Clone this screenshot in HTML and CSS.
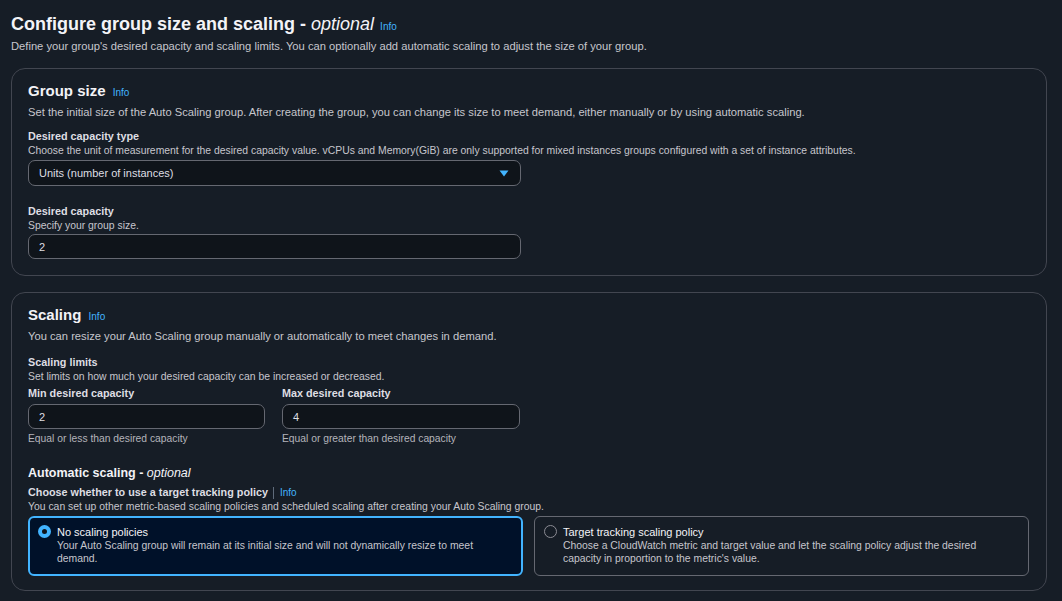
FILE: index.html
```html
<!DOCTYPE html>
<html>
<head>
<meta charset="utf-8">
<link rel="stylesheet" href="styles.css">
</head>
<body>
<div class="page">
  <h1 class="title">Configure group size and scaling - <i>optional</i> <a class="info">Info</a></h1>
  <p class="subtitle">Define your group's desired capacity and scaling limits. You can optionally add automatic scaling to adjust the size of your group.</p>

  <section class="card card-size">
    <h2 class="card-title">Group size <a class="info">Info</a></h2>
    <p class="card-desc">Set the initial size of the Auto Scaling group. After creating the group, you can change its size to meet demand, either manually or by using automatic scaling.</p>

    <div class="field">
      <div class="label">Desired capacity type</div>
      <div class="hint">Choose the unit of measurement for the desired capacity value. vCPUs and Memory(GiB) are only supported for mixed instances groups configured with a set of instance attributes.</div>
      <div class="input select">
        <span>Units (number of instances)</span>
        <svg class="caret" width="10" height="7" viewBox="0 0 10 7"><path d="M0.5 0.5 H9.5 L5 6.5 Z" fill="#42b4ff"/></svg>
      </div>
    </div>

    <div class="field">
      <div class="label">Desired capacity</div>
      <div class="hint">Specify your group size.</div>
      <div class="input">2</div>
    </div>
  </section>

  <section class="card card-scaling">
    <h2 class="card-title">Scaling <a class="info">Info</a></h2>
    <p class="card-desc">You can resize your Auto Scaling group manually or automatically to meet changes in demand.</p>

    <div class="label limits-label">Scaling limits</div>
    <div class="hint">Set limits on how much your desired capacity can be increased or decreased.</div>
    <div class="limits">
      <div class="limit">
        <div class="label">Min desired capacity</div>
        <div class="input">2</div>
        <div class="constraint">Equal or less than desired capacity</div>
      </div>
      <div class="limit">
        <div class="label">Max desired capacity</div>
        <div class="input">4</div>
        <div class="constraint">Equal or greater than desired capacity</div>
      </div>
    </div>

    <div class="auto">
      <div class="auto-title">Automatic scaling - <i>optional</i></div>
      <div class="label">Choose whether to use a target tracking policy <span class="sep"></span><a class="info">Info</a></div>
      <div class="hint">You can set up other metric-based scaling policies and scheduled scaling after creating your Auto Scaling group.</div>
      <div class="tiles">
        <div class="tile selected">
          <span class="radio on"></span>
          <div class="tile-text">
            <div class="tile-label">No scaling policies</div>
            <div class="tile-desc">Your Auto Scaling group will remain at its initial size and will not dynamically resize to meet demand.</div>
          </div>
        </div>
        <div class="tile">
          <span class="radio"></span>
          <div class="tile-text">
            <div class="tile-label">Target tracking scaling policy</div>
            <div class="tile-desc">Choose a CloudWatch metric and target value and let the scaling policy adjust the desired capacity in proportion to the metric's value.</div>
          </div>
        </div>
      </div>
    </div>
  </section>
</div>
</body>
</html>
```

FILE: styles.css
```css
* { box-sizing: border-box; }
html, body {
  margin: 0;
  padding: 0;
  background: #161d26;
  color: #dedee3;
  font-family: "Liberation Sans", Arial, sans-serif;
  font-size: 11px;
  overflow: hidden;
}
.page {
  padding: 12px 15px 0 11px;
}
.title {
  margin: 0;
  font-size: 18px;
  font-weight: bold;
  line-height: 24px;
  height: 24px;
  color: #f3f3f7;
}
.title i { font-weight: normal; }
.info {
  color: #42b4ff;
  font-size: 10px;
  font-weight: normal;
  font-style: normal;
  letter-spacing: 0;
}
.title .info { margin-left: 1px; }
.subtitle {
  margin: 2px 0 0;
  line-height: 16px;
  height: 16px;
  color: #c6c6cd;
  font-size: 11.2px;
}
.card {
  border: 1px solid #424650;
  border-radius: 14px;
  background: #161d26;
  padding: 12px 16px 15px;
}
.card-size { margin-top: 14px; height: 208px; }
.card-scaling { margin-top: 16px; height: 299px; }
.card-title {
  margin: 0;
  font-size: 15px;
  font-weight: bold;
  line-height: 20px;
  height: 20px;
  color: #f3f3f7;
}
.card-title .info { margin-left: 3px; }
.card-desc {
  margin: 3px 0 0;
  line-height: 16px;
  height: 16px;
  color: #c6c6cd;
  font-size: 11.2px;
}
.field { margin-top: 9px; }
.field + .field { margin-top: 18px; }
.field + .field .input { margin-top: 2px; }
.label {
  font-weight: bold;
  color: #dedee3;
  line-height: 15px;
  height: 15px;
  font-size: 10.8px;
}
.limits-label { margin-top: 11px; }
.hint {
  font-size: 10.4px;
  line-height: 13px;
  height: 13px;
  color: #c6c6cd;
}
.input {
  margin-top: 4px;
  height: 25px;
  width: 493px;
  border: 1px solid #656871;
  border-radius: 7px;
  background: #0f141a;
  padding: 0 10px;
  display: flex;
  align-items: center;
  color: #dedee3;
}
.select { justify-content: space-between; padding-right: 11px; height: 26px; margin-top: 3px; }
.caret { display: block; }
.limits {
  display: flex;
  gap: 17px;
  margin-top: 3px;
}
.limit { width: 237px; }
.limit .input { width: 237px; margin-top: 3px; }
.limit:last-child { width: 238px; }
.limit:last-child .input { width: 238px; }
.constraint {
  margin-top: 3px;
  font-size: 10.3px;
  line-height: 14px;
  height: 14px;
  color: #b4b4bb;
}
.auto { margin-top: 19px; }
.auto-title {
  font-size: 12.5px;
  font-weight: bold;
  line-height: 16px;
  height: 16px;
  color: #f3f3f7;
  margin-bottom: 4px;
}
.auto-title i { font-weight: normal; }
.auto .label { display: flex; align-items: center; }
.sep {
  display: inline-block;
  width: 1px;
  height: 12px;
  background: #5f6b7a;
  margin: 0 6px 0 5px;
}
.auto .label .info { font-size: 10px; }
.tiles {
  display: flex;
  gap: 11px;
  margin-top: 3px;
}
.tile {
  width: 495px;
  height: 60px;
  border: 1px solid #656871;
  border-radius: 6px;
  padding: 8px 12px 0 9px;
  display: flex;
  gap: 6px;
}
.tile.selected {
  background: #001129;
  border: 2px solid #42b4ff;
  padding: 7px 12px 0 8px;
}
.radio {
  flex: none;
  width: 13px;
  height: 13px;
  border-radius: 50%;
  border: 1px solid #8c8c94;
  margin-top: 0;
}
.radio.on {
  border: 4px solid #42b4ff;
  background: #0f141a;
}
.tile-label {
  color: #f3f3f7;
  line-height: 14px;
  font-size: 11px;
}
.tile-desc {
  font-size: 10.4px;
  line-height: 13px;
  color: #c6c6cd;
}
```
